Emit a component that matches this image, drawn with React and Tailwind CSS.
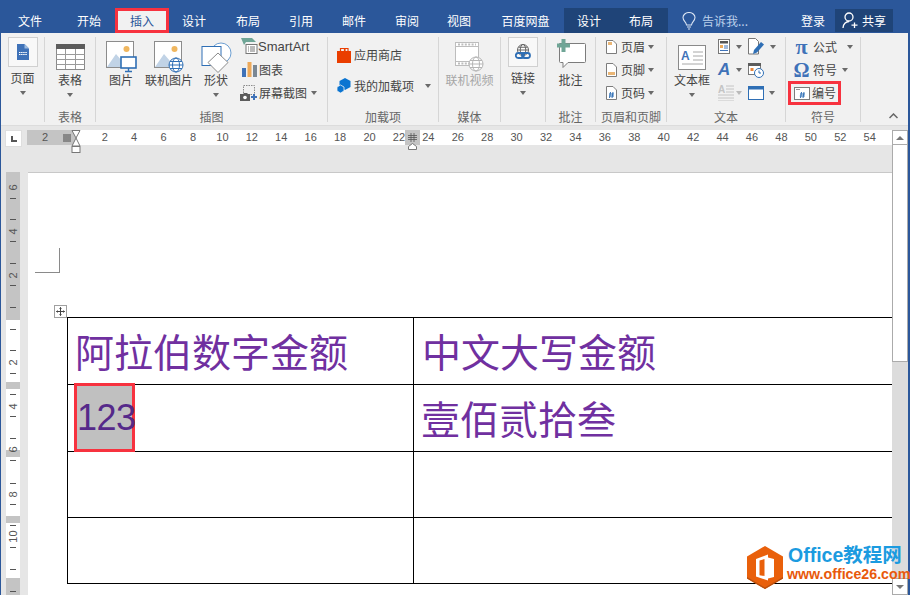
import React from 'react';

const tabs = [
  ['文件', 'w-[60px]'],
  ['开始', 'w-[55px] pl-[3px]'],
  ['插入', 'w-[54px] bg-[#f1f1f1] !text-[#2b579a] border-[3px] border-[#f7323f]'],
  ['设计', 'w-[50px]'],
  ['布局', 'w-[58px]'],
  ['引用', 'w-[48px]'],
  ['邮件', 'w-[58px]'],
  ['审阅', 'w-[48px]'],
  ['视图', 'w-[56px]'],
  ['百度网盘', 'w-[77px]'],
  ['设计', 'w-[50px] bg-[#1f4478]'],
  ['布局', 'w-[54px] bg-[#1f4478]'],
];

const rulerNumbers = [2, 4, 6, 8, 10, 12, 14, 16, 18, 20, 22, 24, 26, 28, 30, 32, 34, 36, 38, 40, 42, 44, 46, 48, 50, 52, 54];

// tick marks and numbers of the vertical ruler, y measured from top of the ruler
const vTicks = [25.7, 47, 69, 91, 113, 135, 157, 178, 201, 222, 244, 266, 288, 311, 332, 353, 375, 397, 419];
const vNumbers = [[15, '6'], [59, '4'], [103, '2'], [190, '2'], [234, '4'], [277, '6'], [322, '8'], [364, '10']];

function Caret({ className = '' }) {
  return <span className={`inline-block w-0 h-0 border-x-[3.5px] border-t-[4px] border-x-transparent border-t-[#6a6a6a] ${className}`} />;
}

function Group({ label, className, children }) {
  return (
    <div className={`h-[85px] flex flex-col border-r border-[#d6d6d6] ${className}`}>
      <div className="flex-1 flex min-h-0">{children}</div>
      <div className="h-[18px] leading-[26px] text-center text-[#666] whitespace-nowrap">{label}</div>
    </div>
  );
}

function BigButton({ width, icon, label, boxed, disabled, caret, top = 'pt-[4px]' }) {
  return (
    <div className={`flex flex-col items-center ${width} ${top} ${disabled ? 'text-[#a6a6a6]' : ''}`}>
      {boxed ? (
        <div className="w-[30px] h-[30px] mb-[3px] bg-[#f8f8f8] border border-[#d0d0d0] flex items-center justify-center">{icon}</div>
      ) : (
        <div className="h-[32px] -mb-[1px] flex items-center justify-center">{icon}</div>
      )}
      <div className="leading-[16px] whitespace-nowrap">{label}</div>
      {caret && <Caret className="mt-[5px]" />}
    </div>
  );
}

function SmallRow({ icon, label, caret, iconBox = 'w-[18px]' }) {
  return (
    <div className="h-[23px] flex items-center whitespace-nowrap">
      <span className={`${iconBox} flex justify-center shrink-0`}>{icon}</span>
      <span>{label}</span>
      {caret}
    </div>
  );
}

function PageIcon() {
  return (
    <svg width="12" height="16" viewBox="0 0 12 16">
      <path d="M0 0h7.5l4.5 4.5V16H0z" fill="#3f72b8" />
      <path d="M7.5 0v4.5H12z" fill="#9dbbe0" />
      <path d="M2 8.5h8M2 10.5h8" stroke="#fff" strokeWidth="1" strokeDasharray="1.5 .6" />
    </svg>
  );
}

function TableIcon() {
  return (
    <svg width="29" height="26" viewBox="0 0 29 26">
      <rect x=".5" y=".5" width="28" height="25" fill="#fff" stroke="#8a8a8a" />
      <rect x="0" y="0" width="29" height="5" fill="#5c5c5c" />
      <path d="M.5 10.5h28M.5 15.5h28M.5 20.5h28M9.5 5v20M19.5 5v20" stroke="#9a9a9a" />
    </svg>
  );
}

function PictureBase() {
  return (
    <>
      <rect x=".5" y=".5" width="27" height="26" fill="#fff" stroke="#8c8c8c" />
      <circle cx="20.5" cy="8" r="3" fill="#f0b760" />
      <path d="M1 26 L10 13 L16 20 L20 17 L26 26z" fill="#c1d3e6" />
    </>
  );
}

function PictureIcon() {
  return (
    <svg width="31" height="32" viewBox="0 0 31 32">
      <PictureBase />
      <rect x="15" y="16" width="15" height="11" fill="#fff" stroke="#2f6fb5" strokeWidth="1.6" />
      <path d="M22.5 27v3M19 30.5h7" stroke="#2f6fb5" strokeWidth="1.4" />
    </svg>
  );
}

function Globe({ x, y, r, color }) {
  return (
    <g fill="#fff" stroke={color} strokeWidth="1">
      <circle cx={x} cy={y} r={r} />
      <ellipse cx={x} cy={y} rx={r / 2} ry={r} fill="none" />
      <path d={`M${x - r} ${y}h${r * 2}M${x - r + 1} ${y - r / 2}h${r * 2 - 2}M${x - r + 1} ${y + r / 2}h${r * 2 - 2}`} fill="none" />
    </g>
  );
}

function OnlinePictureIcon() {
  return (
    <svg width="30" height="32" viewBox="0 0 30 32">
      <PictureBase />
      <Globe x={22} y={24} r={7} color="#2f6fb5" />
    </svg>
  );
}

function ShapeIcon() {
  return (
    <svg width="31" height="31" viewBox="0 0 31 31">
      <circle cx="20" cy="11" r="10" fill="#fff" stroke="#6d9fd2" />
      <rect x="1" y="4.5" width="19" height="19" fill="#fff" stroke="#2f6fb5" />
      <path d="M17 11l10 9.5-10 10-10-10z" fill="#fff" stroke="#8a8a8a" />
    </svg>
  );
}

function SmartArtIcon() {
  return (
    <svg width="17" height="17" viewBox="0 0 17 17">
      <path d="M0 0h11l4 4H5l-2 3z" fill="#6fa596" />
      <rect x="5" y="6.5" width="11" height="9" fill="#fff" stroke="#777" />
      <path d="M7 9h1M7 11h1M7 13h1M9 9h5M9 11h5M9 13h5" stroke="#777" />
    </svg>
  );
}

function ChartIcon() {
  return (
    <svg width="15" height="15" viewBox="0 0 15 15">
      <rect x="0" y="6" width="4" height="9" fill="#3f72b8" />
      <rect x="5.5" y="0" width="4" height="15" fill="#eda95a" />
      <rect x="11" y="3" width="4" height="12" fill="#7b8894" />
    </svg>
  );
}

function ScreenshotIcon() {
  return (
    <svg width="18" height="16" viewBox="0 0 18 16">
      <rect x="3.5" y=".5" width="11" height="9" fill="none" stroke="#8a8a8a" strokeDasharray="1.5 1" />
      <path d="M0 9h3l1-1h3l1 1h2v7H0z" fill="#5c5c5c" />
      <circle cx="5" cy="12.5" r="1.8" fill="#fff" />
      <path d="M14 9v6M11 12h6" stroke="#3f72b8" strokeWidth="2" />
    </svg>
  );
}

function StoreIcon() {
  return (
    <svg width="14" height="16" viewBox="0 0 14 16">
      <path d="M0 4h14v12H0z" fill="#ea3e00" />
      <path d="M3.5 4V1.5h4V4M8 4V1.5h3V4" fill="none" stroke="#ea3e00" strokeWidth="1.2" />
    </svg>
  );
}

function AddinsIcon() {
  return (
    <svg width="14" height="15" viewBox="0 0 14 15">
      <path d="M8 0l5.5 3v6L8 12 2.5 9V3z" fill="#0a74d1" />
      <path d="M3.5 7L7 9v4l-3.500 2L0 13V9z" fill="#0a74d1" stroke="#f1f1f1" strokeWidth=".8" />
    </svg>
  );
}

function VideoIcon() {
  return (
    <svg width="29" height="30" viewBox="0 0 29 30">
      <rect x=".5" y=".5" width="23" height="23" fill="#fff" stroke="#bdbdbd" />
      <path d="M1 4.500h22M1 19.500h22" stroke="#bdbdbd" />
      <path d="M3 2.500h18M3 21.500h18" stroke="#bdbdbd" strokeDasharray="2 1.400" strokeWidth="2" />
      <Globe x={21} y={22} r={7} color="#b5b5b5" />
    </svg>
  );
}

function LinkIcon() {
  return (
    <svg width="16" height="17" viewBox="0 0 16 17">
      <Globe x={8} y={6} r={5.500} color="#666" />
      <rect x=".8" y="9" width="8" height="5" rx="2.500" fill="none" stroke="#2f6fb5" strokeWidth="1.800" />
      <rect x="7" y="9" width="8" height="5" rx="2.500" fill="none" stroke="#2f6fb5" strokeWidth="1.800" />
    </svg>
  );
}

function CommentIcon() {
  return (
    <svg className="-mt-[6px]" width="31" height="30" viewBox="0 0 31 30">
      <path d="M4.500 4.500h25a1 1 0 0 1 1 1v17a1 1 0 0 1-1 1H13l-5 5v-5H5.500a1 1 0 0 1-1-1z" fill="#fff" stroke="#7c7c7c" />
      <path d="M8.500 0v13M2 6.500h13" stroke="#6fa596" strokeWidth="4" />
    </svg>
  );
}

function DocIcon({ kind }) {
  return (
    <svg width="11" height="14" viewBox="0 0 11 14">
      <path d="M.5.500h6.500l3.500 3.500v9.500H.5z" fill="#fff" stroke="#7c7c7c" />
      {kind === 'head' && <rect x="2" y="2" width="4" height="3" fill="#eab676" />}
      {kind === 'foot' && <rect x="2" y="9" width="7" height="3" fill="#eab676" />}
      {kind === 'num' && <path d="M4.500 6l-1 6M7 6l-1 6M3 8h5M3 10h5" stroke="#2f6fb5" />}
    </svg>
  );
}

function TextBoxIcon() {
  return (
    <svg width="28" height="25" viewBox="0 0 28 25">
      <rect x=".5" y=".5" width="27" height="24" fill="#fff" stroke="#8a8a8a" />
      <path d="M15 7h10M15 11h10M15 15h10M4 19h21" stroke="#a8a8a8" />
      <text x="3" y="15" fontSize="12" fontWeight="700" fill="#3f72b8" fontFamily="Liberation Sans">A</text>
    </svg>
  );
}

function QuickPartsIcon() {
  return (
    <svg width="14" height="15" viewBox="0 0 14 15">
      <rect x=".5" y=".5" width="11" height="14" fill="#fff" stroke="#777" />
      <rect x="2" y="2" width="8" height="2.500" fill="#555" />
      <rect x="2" y="6" width="3" height="3" fill="#eda95a" />
      <path d="M6 7h4M6 9h4M2 11.500h8" stroke="#3f72b8" />
    </svg>
  );
}

function SignIcon() {
  return (
    <svg width="18" height="17" viewBox="0 0 18 17">
      <path d="M.5.500h7l3 3v12.500H.5z" fill="#fff" stroke="#777" />
      <path d="M6 12l7-8 3 2.500-7 8-4 1.500z" fill="#2f6fb5" />
    </svg>
  );
}

function DateIcon() {
  return (
    <svg width="16" height="16" viewBox="0 0 16 16">
      <rect x=".5" y="1.500" width="12" height="11" fill="#fff" stroke="#777" />
      <rect x="0" y="1" width="13" height="3" fill="#5c5c5c" />
      <rect x="2.500" y="6" width="3" height="3" fill="#e8863a" />
      <circle cx="11" cy="11" r="4.500" fill="#fff" stroke="#2f6fb5" />
      <path d="M11 8.500V11h2" stroke="#2f6fb5" fill="none" />
    </svg>
  );
}

function DropCapIcon() {
  return (
    <svg width="16" height="16" viewBox="0 0 16 16">
      <path d="M8 1h8M8 4h8M8 7h8M0 10h16M0 13h16M0 16h16" stroke="#c4c4c4" />
      <text x="0" y="8" fontSize="10" fontWeight="700" fill="#c4c4c4" fontFamily="Liberation Sans">A</text>
    </svg>
  );
}

function ObjectIcon() {
  return (
    <svg width="16" height="14" viewBox="0 0 16 14">
      <rect x=".5" y=".5" width="15" height="13" fill="#fff" stroke="#2f6fb5" />
      <rect x="0" y="0" width="16" height="3.500" fill="#2f6fb5" />
    </svg>
  );
}

function NumberIcon() {
  return (
    <svg width="16" height="13" viewBox="0 0 16 13">
      <rect x=".5" y=".5" width="15" height="12" fill="#fff" stroke="#7c7c7c" />
      <path d="M2 2.500h4" stroke="#9a9a9a" />
      <path d="M7.500 5l-1 6M10 5l-1 6M6 7h5M5.800 9h5" stroke="#2f6fb5" />
    </svg>
  );
}

function MoveHandle() {
  return (
    <svg width="13" height="13" viewBox="0 0 13 13">
      <rect x=".5" y=".5" width="12" height="12" fill="#fff" stroke="#a0a0a0" />
      <path d="M6.500 2.500v8M2.500 6.500h8M5.500 3.500l1-1 1 1M5.500 9.500l1 1 1-1M3.500 5.500l-1 1 1 1M9.500 5.500l1 1-1 1" stroke="#444" fill="none" />
    </svg>
  );
}

function OfficeLogo() {
  return (
    <svg width="36" height="43" viewBox="0 0 36 43">
      <path d="M18 0l18 10.500v22L18 43 0 32.500v-22z" fill="#e9600b" />
      <path d="M0 31v1.500L18 43l18-10.500V31L18 41.500z" fill="#b9500f" />
      <path d="M9 13l12-4.500v26L9 30.500zM21 11.500l6 1.500v18l-6 1.500" fill="#fff" />
      <path d="M12.500 14.500l5-1.500v17l-5-.8z" fill="#e9600b" />
    </svg>
  );
}

function TabBar() {
  return (
    <div className="h-[33px] bg-[#2b579a] flex items-end text-white shrink-0">
      {tabs.map(([name, cls], i) => (
        <div key={i} className={`h-[25px] flex items-center justify-center ${cls}`}>
          {name}
        </div>
      ))}
      <div className="h-[25px] flex items-center ml-[14px] text-[#bcd0ea]">
        <svg width="14" height="18" viewBox="0 0 14 18" fill="none" stroke="#dbe5f3" strokeWidth="1.100">
          <path d="M4.500 13c0-3-3.500-4-3.500-7.500a6 5 0 0 1 12 0C13 9 9.500 10 9.500 13zM5 15h4M6 17h2" />
        </svg>
        <span className="ml-[6px]">告诉我...</span>
      </div>
      <div className="flex-1" />
      <div className="h-[25px] flex items-center mr-[10px]">登录</div>
      <div className="w-[58px] h-[23px] mb-[1px] mr-[17px] bg-[#1f4478] flex items-center justify-center gap-[3px]">
        <svg width="17" height="17" viewBox="0 0 17 17" fill="none" stroke="#fff" strokeWidth="1.300">
          <circle cx="7" cy="5" r="4" />
          <path d="M1 16c0-4 3-6.500 6-6.500M12.500 10.500v5.500M9.500 13.200h6" />
        </svg>
        <span>共享</span>
      </div>
    </div>
  );
}

function Ribbon() {
  return (
    <div className="h-[93px] bg-[#f1f1f1] border-b border-[#dcdcdc] flex pt-[4px] shrink-0 text-[#444]">
      <Group label="" className="w-[44px]">
        <BigButton width="w-[43px]" boxed icon={<PageIcon />} label="页面" caret top="pt-0" />
      </Group>
      <Group label="表格" className="w-[51px]">
        <BigButton width="w-[50px]" icon={<TableIcon />} label="表格" caret />
      </Group>
      <Group label="插图" className="w-[232px]">
        <BigButton width="w-[50px]" icon={<PictureIcon />} label="图片" />
        <BigButton width="w-[46px]" icon={<OnlinePictureIcon />} label="联机图片" />
        <BigButton width="w-[48px]" icon={<ShapeIcon />} label="形状" caret />
        <div className="-mt-[2px]">
          <SmallRow icon={<SmartArtIcon />} label={<span className="text-[13px] [font-family:'Liberation_Sans',sans-serif]">SmartArt</span>} />
          <SmallRow icon={<ChartIcon />} label={<span className="ml-[1px]">图表</span>} />
          <SmallRow icon={<ScreenshotIcon />} label={<span className="ml-[1px]">屏幕截图</span>} caret={<Caret className="ml-[4px]" />} />
        </div>
      </Group>
      <Group label="加载项" className="w-[111px]">
        <div className="pl-[7px] pt-[6px]">
          <SmallRow icon={<StoreIcon />} label={<span className="ml-[1px]">应用商店</span>} />
          <div className="h-[8px]" />
          <SmallRow icon={<AddinsIcon />} label={<span className="ml-[1px]">我的加载项</span>} caret={<Caret className="ml-[11px]" />} />
        </div>
      </Group>
      <Group label="媒体" className="w-[62px]">
        <BigButton width="w-[61px]" disabled icon={<VideoIcon />} label="联机视频" />
      </Group>
      <Group label="" className="w-[45px]">
        <BigButton width="w-[44px]" boxed icon={<LinkIcon />} label="链接" caret top="pt-0" />
      </Group>
      <Group label="批注" className="w-[50px]">
        <BigButton width="w-[49px]" icon={<CommentIcon />} label="批注" />
      </Group>
      <Group label="页眉和页脚" className="w-[71px]">
        <div className="pl-[5px] -mt-[2px]">
          <SmallRow icon={<DocIcon kind="head" />} iconBox="w-[20px]" label="页眉" caret={<Caret className="ml-[3px]" />} />
          <SmallRow icon={<DocIcon kind="foot" />} iconBox="w-[20px]" label="页脚" caret={<Caret className="ml-[3px]" />} />
          <SmallRow icon={<DocIcon kind="num" />} iconBox="w-[20px]" label="页码" caret={<Caret className="ml-[3px]" />} />
        </div>
      </Group>
      <Group label="文本" className="w-[119px]">
        <BigButton width="w-[50px]" icon={<TextBoxIcon />} label="文本框" caret />
        <div className="grid grid-cols-[30px_36px] grid-rows-[23px_23px_23px] content-start pl-[1px] -mt-[2px]">
          <div className="h-[23px] flex items-center gap-[4px]"><QuickPartsIcon /><Caret /></div>
          <div className="h-[23px] flex items-center gap-[4px]"><SignIcon /><Caret /></div>
          <div className="h-[23px] flex items-center gap-[4px]">
            <span className="text-[#3f72b8] font-bold italic text-[17px] w-[14px] leading-none [font-family:'Liberation_Sans',sans-serif]">A</span>
            <Caret />
          </div>
          <div className="h-[23px] flex items-center"><DateIcon /></div>
          <div className="h-[23px] flex items-center gap-[2px]"><DropCapIcon /><Caret className="opacity-40" /></div>
          <div className="h-[23px] flex items-center gap-[5px]"><ObjectIcon /><Caret /></div>
        </div>
      </Group>
      <Group label="符号" className="w-[75px]">
        <div className="pl-[5px] -mt-[2px]">
          <SmallRow
            iconBox="w-[21px]"
            icon={<span className="text-[#3f72b8] font-bold text-[22px] leading-none [font-family:'Liberation_Serif',serif]">π</span>}
            label={<span className="ml-[1px]">公式</span>}
            caret={<Caret className="ml-[10px]" />}
          />
          <SmallRow
            iconBox="w-[21px]"
            icon={<span className="text-[#3f72b8] font-bold text-[20px] leading-none [font-family:'Liberation_Serif',serif]">Ω</span>}
            label={<span className="ml-[1px]">符号</span>}
            caret={<Caret className="ml-[5px]" />}
          />
          <div className="w-[53px] h-[24px] -ml-[3px] border-[3px] border-[#f7323f] flex items-center">
            <span className="w-[21px] flex justify-center shrink-0"><NumberIcon /></span>
            <span>编号</span>
          </div>
        </div>
      </Group>
      <div className="flex-1 flex items-end justify-end pr-[10px] pb-[6px]">
        <svg width="9" height="6" viewBox="0 0 9 6" fill="none" stroke="#666" strokeWidth="1.500">
          <path d="M.5 5l4-4 4 4" />
        </svg>
      </div>
    </div>
  );
}

function TopRuler() {
  return (
    <div className="h-[46px] bg-[#e6e6e6] flex items-start pt-[4px] shrink-0 relative">
      <div className="w-[17px] h-[17px] ml-[4px] bg-white border border-[#dedede] flex items-center justify-center shrink-0">
        <span className="w-[6px] h-[6px] border-l-2 border-b-2 border-[#555]" />
      </div>
      <div className="ml-[5px] flex-1 h-[15px] bg-white flex text-[11px] leading-[15px] text-[#555] [font-family:'Liberation_Sans',sans-serif] overflow-hidden">
        <div className="w-[48px] bg-[#c4c4c4] flex shrink-0">
          <span className="w-[36px] text-center">2</span>
          <svg className="mt-[4px]" width="8" height="8" viewBox="0 0 8 8" stroke="#666" strokeWidth=".8">
            <path d="M0 1h8M0 3h8M0 5h8M0 7h8M1 0v8M3 0v8M5 0v8M7 0v8" />
          </svg>
        </div>
        <div className="w-[15px] shrink-0" />
        {rulerNumbers.map((n) => (
          <span key={n} className="w-[29.430px] text-center shrink-0">{n}</span>
        ))}
      </div>
      {/* indent markers sit on top of the ruler */}
      <svg className="absolute left-[70px] top-[4px]" width="10" height="24" viewBox="0 0 10 24" stroke="#777" fill="#fff">
        <path d="M1 .5h8L5 8zM5 8l4 8H1z" />
        <rect x="1" y="16.500" width="8" height="6" />
      </svg>
      <div className="absolute left-[404px] top-[4px] w-[15px] h-[15px] bg-[#c4c4c4] flex items-center justify-center">
        <svg width="9" height="9" viewBox="0 0 9 9" stroke="#555" strokeWidth=".8">
          <path d="M0 2.500h9M0 4.500h9M0 6.500h9M3 0v9M6 0v9" />
        </svg>
      </div>
      <svg className="absolute left-[407px] top-[17px]" width="9" height="7" viewBox="0 0 9 7" fill="#fff" stroke="#777">
        <path d="M.5 6.500V3.500l4-3 4 3v3z" />
      </svg>
    </div>
  );
}

function VRuler() {
  return (
    <div className="w-[27px] bg-[#e6e6e6] pl-[5px] shrink-0 overflow-hidden">
      <div className="w-[14px] relative flex flex-col text-[11px] text-[#555] [font-family:'Liberation_Sans',sans-serif]">
        <div className="h-[148px] bg-[#c4c4c4]" />
        <div className="h-[62px] bg-white" />
        <div className="h-[7px] bg-[#c4c4c4]" />
        <div className="h-[61px] bg-white" />
        <div className="h-[7px] bg-[#c4c4c4]" />
        <div className="h-[59px] bg-white" />
        <div className="h-[7px] bg-[#c4c4c4]" />
        <div className="h-[55px] bg-white" />
        <div className="h-[20px] bg-[#c4c4c4]" />
        {vTicks.map((y) => (
          <span key={y} className="absolute left-[4px] w-[6px] h-px bg-[#555]" style={{ top: y }} />
        ))}
        {vNumbers.map(([y, n]) => (
          <span key={y} className="absolute left-0 w-[14px] text-center leading-none -rotate-90" style={{ top: y - 5 }}>
            {n}
          </span>
        ))}
      </div>
    </div>
  );
}

function Page() {
  const purple = "text-[#7030a0] text-[39px] leading-none [font-family:'Noto_Sans_CJK_SC',sans-serif] whitespace-nowrap";
  return (
    <div className="flex-1 bg-white border-t border-[#c8c8c8] overflow-hidden relative">
      <div className="w-[25px] h-[25px] ml-[7px] mt-[75px] border-r border-b border-[#8a8a8a]" />
      <span className="absolute left-[26px] top-[132px] leading-none"><MoveHandle /></span>
      <table className="ml-[39px] mt-[44px] w-[840px] border-collapse table-fixed">
        <colgroup>
          <col className="w-[346px]" />
          <col />
        </colgroup>
        <tbody>
          <tr className="h-[67px]">
            <td className="border border-black pl-[7px] align-middle"><span className={purple}>阿拉伯数字金额</span></td>
            <td className="border border-black pl-[8px] align-middle"><span className={purple}>中文大写金额</span></td>
          </tr>
          <tr className="h-[67px]">
            <td className="border border-black pl-[6px] p-0 align-top">
              <div className="relative -mt-[2px] -mb-[1px] w-[61px] h-[69px] bg-[#c0c0c0] border-[3px] border-[#f7323f] flex items-center pl-0">
                <span className="text-[#55298a] text-[36px] tracking-[-0.5px] leading-none [font-family:'Liberation_Sans',sans-serif]">123</span>
              </div>
            </td>
            <td className="border border-black pl-[7px] align-middle"><span className={purple}>壹佰贰拾叁</span></td>
          </tr>
          <tr className="h-[66px]">
            <td className="border border-black" />
            <td className="border border-black" />
          </tr>
          <tr className="h-[66px]">
            <td className="border border-black" />
            <td className="border border-black" />
          </tr>
        </tbody>
      </table>
    </div>
  );
}

function Scrollbar() {
  return (
    <div className="w-[16px] bg-[#e6e6e6] flex flex-col pt-[4px] shrink-0">
      <div className="h-[15px] bg-white border border-[#ababab] flex items-center justify-center">
        <span className="w-0 h-0 border-x-[4px] border-b-[4px] border-x-transparent border-b-[#777]" />
      </div>
      <div className="h-[217px] bg-white border-x border-b border-[#ababab]" />
      <div className="flex-1 bg-[#dcdcdc]" />
      <div className="h-[17px] bg-white border border-[#ababab] flex items-center justify-center">
        <span className="w-0 h-0 border-x-[4px] border-t-[4px] border-x-transparent border-t-[#777]" />
      </div>
    </div>
  );
}

export default function App() {
  return (
    <div className="relative w-[910px] h-[595px] overflow-hidden flex flex-col bg-[#e6e6e6] text-[12px] [font-family:'Noto_Sans_CJK_SC','Noto_Sans',sans-serif]">
      <TabBar />
      <div className="border-l border-r-2 border-[#2b579a] flex-1 flex flex-col min-h-0">
        <Ribbon />
        <div className="flex-1 flex min-h-0">
          <div className="flex-1 flex flex-col min-w-0">
            <TopRuler />
            <div className="flex-1 flex min-h-0">
              <VRuler />
              <Page />
            </div>
          </div>
          <Scrollbar />
        </div>
      </div>

      {/* site watermark over the bottom right corner */}
      <div className="absolute left-[747px] top-[546px] flex">
        <OfficeLogo />
        <div className="ml-[5px] -mt-[3px] font-bold [font-family:'Liberation_Sans','Noto_Sans_CJK_SC',sans-serif]">
          <div className="text-[19.500px] leading-[24px] text-[#1b9be0] whitespace-nowrap">Office教程网</div>
          <div className="text-[14.200px] leading-[14px] -ml-[1px] text-[#e8590c] whitespace-nowrap">www.office26.com</div>
        </div>
      </div>
    </div>
  );
}
